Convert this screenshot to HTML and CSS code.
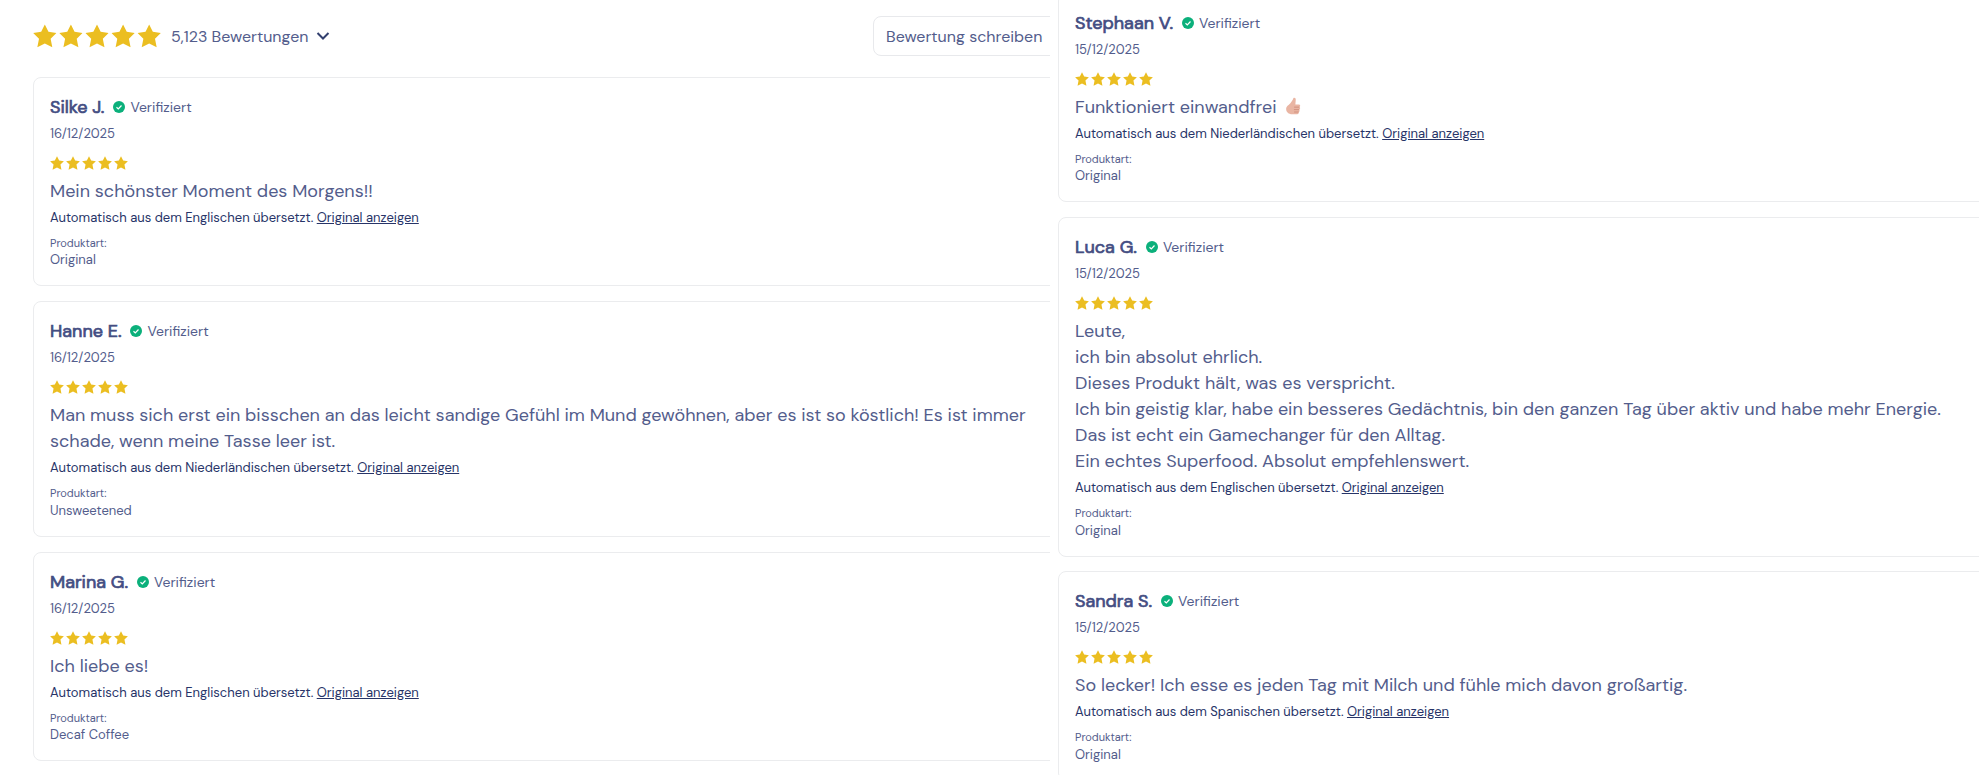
FILE: index.html
```html
<!DOCTYPE html>
<html lang="de">
<head>
    <meta charset="UTF-8">
    <title>Bewertungen</title>
    <link rel="stylesheet" href="styles.css">
</head>
<body>
    <svg class="sprite">
        <symbol id="star" viewBox="0 0 24 24">
            <path d="M12 .3l3.700 7.500 8.100 1.100-5.900 5.800 1.700 8.700L12 19.500l-7.600 3.900 1.700-8.700L.2 8.900l8.100-1.100z"/>
        </symbol>
        <symbol id="stars" viewBox="0 0 130 24">
            <use href="#star" x="0" width="24" height="24"/>
            <use href="#star" x="26.500" width="24" height="24"/>
            <use href="#star" x="53" width="24" height="24"/>
            <use href="#star" x="79.500" width="24" height="24"/>
            <use href="#star" x="106" width="24" height="24"/>
        </symbol>
        <symbol id="stars-small" viewBox="0 0 78 14">
            <use href="#star" x="0" width="14" height="14"/>
            <use href="#star" x="16" width="14" height="14"/>
            <use href="#star" x="32" width="14" height="14"/>
            <use href="#star" x="48" width="14" height="14"/>
            <use href="#star" x="64" width="14" height="14"/>
        </symbol>
        <symbol id="check" viewBox="0 0 12 12">
            <circle cx="6" cy="6" r="6" fill="#0bb07b"/>
            <path d="M3.500 6.200l1.800 1.700 3.200-3.400" fill="none" stroke="#fff" stroke-width="1.200"/>
        </symbol>
    </svg>

    <div id="container">
        <div id="left">
            <div class="summary">
                <svg class="stars-big"><use href="#stars"/></svg>
                <span class="count">5,123 Bewertungen</span>
                <svg class="chevron" viewBox="0 0 14 10"><path d="M1.500 2l5.500 5.500L12.500 2"/></svg>
                <button class="write">Bewertung schreiben</button>
            </div>
            <div class="reviews">
                <div class="review">
                    <div class="author"><b>Silke J.</b><svg class="check"><use href="#check"/></svg><span>Verifiziert</span></div>
                    <div class="date">16/12/2025</div>
                    <svg class="stars"><use href="#stars-small"/></svg>
                    <p class="text">Mein schönster Moment des Morgens!!</p>
                    <div class="translated">Automatisch aus dem Englischen übersetzt. <a>Original anzeigen</a></div>
                    <div class="label">Produktart:</div>
                    <div class="variant">Original</div>
                </div>
                <div class="review">
                    <div class="author"><b>Hanne E.</b><svg class="check"><use href="#check"/></svg><span>Verifiziert</span></div>
                    <div class="date">16/12/2025</div>
                    <svg class="stars"><use href="#stars-small"/></svg>
                    <p class="text">Man muss sich erst ein bisschen an das leicht sandige Gefühl im Mund gewöhnen, aber es ist so köstlich! Es ist immer<br>schade, wenn meine Tasse leer ist.</p>
                    <div class="translated">Automatisch aus dem Niederländischen übersetzt. <a>Original anzeigen</a></div>
                    <div class="label">Produktart:</div>
                    <div class="variant">Unsweetened</div>
                </div>
                <div class="review">
                    <div class="author"><b>Marina G.</b><svg class="check"><use href="#check"/></svg><span>Verifiziert</span></div>
                    <div class="date">16/12/2025</div>
                    <svg class="stars"><use href="#stars-small"/></svg>
                    <p class="text">Ich liebe es!</p>
                    <div class="translated">Automatisch aus dem Englischen übersetzt. <a>Original anzeigen</a></div>
                    <div class="label">Produktart:</div>
                    <div class="variant">Decaf Coffee</div>
                </div>
            </div>
        </div>
        <div id="right">
            <div class="reviews">
                <div class="review">
                    <div class="author"><b>Stephaan V.</b><svg class="check"><use href="#check"/></svg><span>Verifiziert</span></div>
                    <div class="date">15/12/2025</div>
                    <svg class="stars"><use href="#stars-small"/></svg>
                    <p class="text">Funktioniert einwandfrei
                        <svg class="thumb" viewBox="0 0 16 20">
                            <path d="M8.500 1c1.500-.6 2.500.3 2.400 1.900L10.500 8h3.700c1.600 0 1.800 2 .7 2.600 1 .9.700 2.300-.3 2.700.7 1 .3 2.200-.6 2.500.4 1.200-.3 2.400-1.600 2.400H7C3.500 18.200.8 16 .8 12.700.8 9.500 3.400 8.600 5 6.800 6.400 5.200 7.500 3.500 8.500 1z" fill="#e9b5a3"/>
                            <path d="M14.600 10.700H9.200M14.400 13.300H9M13.900 15.800H9.200" fill="none" stroke="#c98673" stroke-width=".8"/>
                        </svg>
                    </p>
                    <div class="translated">Automatisch aus dem Niederländischen übersetzt. <a>Original anzeigen</a></div>
                    <div class="label">Produktart:</div>
                    <div class="variant">Original</div>
                </div>
                <div class="review">
                    <div class="author"><b>Luca G.</b><svg class="check"><use href="#check"/></svg><span>Verifiziert</span></div>
                    <div class="date">15/12/2025</div>
                    <svg class="stars"><use href="#stars-small"/></svg>
                    <p class="text">Leute,<br>ich bin absolut ehrlich.<br>Dieses Produkt hält, was es verspricht.<br>Ich bin geistig klar, habe ein besseres Gedächtnis, bin den ganzen Tag über aktiv und habe mehr Energie.<br>Das ist echt ein Gamechanger für den Alltag.<br>Ein echtes Superfood. Absolut empfehlenswert.</p>
                    <div class="translated">Automatisch aus dem Englischen übersetzt. <a>Original anzeigen</a></div>
                    <div class="label">Produktart:</div>
                    <div class="variant">Original</div>
                </div>
                <div class="review">
                    <div class="author"><b>Sandra S.</b><svg class="check"><use href="#check"/></svg><span>Verifiziert</span></div>
                    <div class="date">15/12/2025</div>
                    <svg class="stars"><use href="#stars-small"/></svg>
                    <p class="text">So lecker! Ich esse es jeden Tag mit Milch und fühle mich davon großartig.</p>
                    <div class="translated">Automatisch aus dem Spanischen übersetzt. <a>Original anzeigen</a></div>
                    <div class="label">Produktart:</div>
                    <div class="variant">Original</div>
                </div>
            </div>
        </div>
    </div>
</body>
</html>
```
FILE: styles.css
```css
* {
    box-sizing: border-box;
}
body {
    margin: 0;
    font-family: "DM Sans", Lato, "Open Sans", sans-serif;
    color: #535d8c;
    background: #fff;
    overflow: hidden;
}
.sprite {
    display: none;
}
#container {
    display: flex;
    gap: 8px;
    height: 775px;
    overflow: hidden;
}
#left {
    width: 1050px;
    padding: 16px 0 0 33px;
    overflow: hidden;
}
#right {
    flex: 1;
    overflow: hidden;
}
#right .reviews {
    gap: 14.6px;
    margin-top: -7px;
}
.summary {
    display: flex;
    align-items: center;
    height: 40px;
    margin-bottom: 21px;
}
.stars-big {
    width: 128px;
    height: 24px;
    fill: #ebbe21;
}
.count {
    margin-left: 10px;
    width: 137px;
    font-size: 16px;
    white-space: nowrap;
}
.chevron {
    width: 14px;
    height: 10px;
    margin-left: 8px;
    fill: none;
    stroke: #33406f;
    stroke-width: 2;
}
.write {
    flex: none;
    width: 190px;
    height: 40px;
    margin: 0 -13px 0 auto;
    padding: 0 0 0 12px;
    border: 1px solid #e8e9ec;
    border-radius: 8px;
    background: #fff;
    color: inherit;
    font-family: inherit;
    font-size: 16px;
    text-align: left;
    white-space: nowrap;
}
.reviews {
    display: flex;
    flex-direction: column;
    gap: 14.9px;
    margin-right: -14px; /* cards run past the column edge */
}
.review {
    padding: 16px;
    border: 1px solid #ebecee;
    border-radius: 8px;
    white-space: nowrap;
}
.author {
    display: flex;
    align-items: center;
    height: 26px;
    font-size: 14px;
}
.author b {
    color: #434d82;
    font-size: 18px;
    font-weight: 400;
    -webkit-text-stroke: 0.7px #434d82;
}
.check {
    width: 12px;
    height: 12px;
    margin: 0 5px 0 9px;
}
.date {
    margin-top: 4px;
    font-size: 13px;
    line-height: 20px;
}
.stars {
    display: block;
    width: 78px;
    height: 14px;
    margin: 12px 0 8px;
    fill: #ebbe21;
}
.text {
    margin: 0;
    font-size: 18px;
    line-height: 26px;
}
.thumb {
    width: 16px;
    height: 19px;
    margin-left: 4px;
    vertical-align: -3px;
}
.translated {
    margin-top: 4.8px;
    color: #273468;
    font-size: 13px;
    line-height: 18px;
}
.translated a {
    text-decoration: underline;
}
.label {
    margin-top: 8.2px;
    font-size: 11px;
    line-height: 16px;
}
.variant {
    margin-top: 0.5px;
    font-size: 13px;
    line-height: 18px;
}
```
